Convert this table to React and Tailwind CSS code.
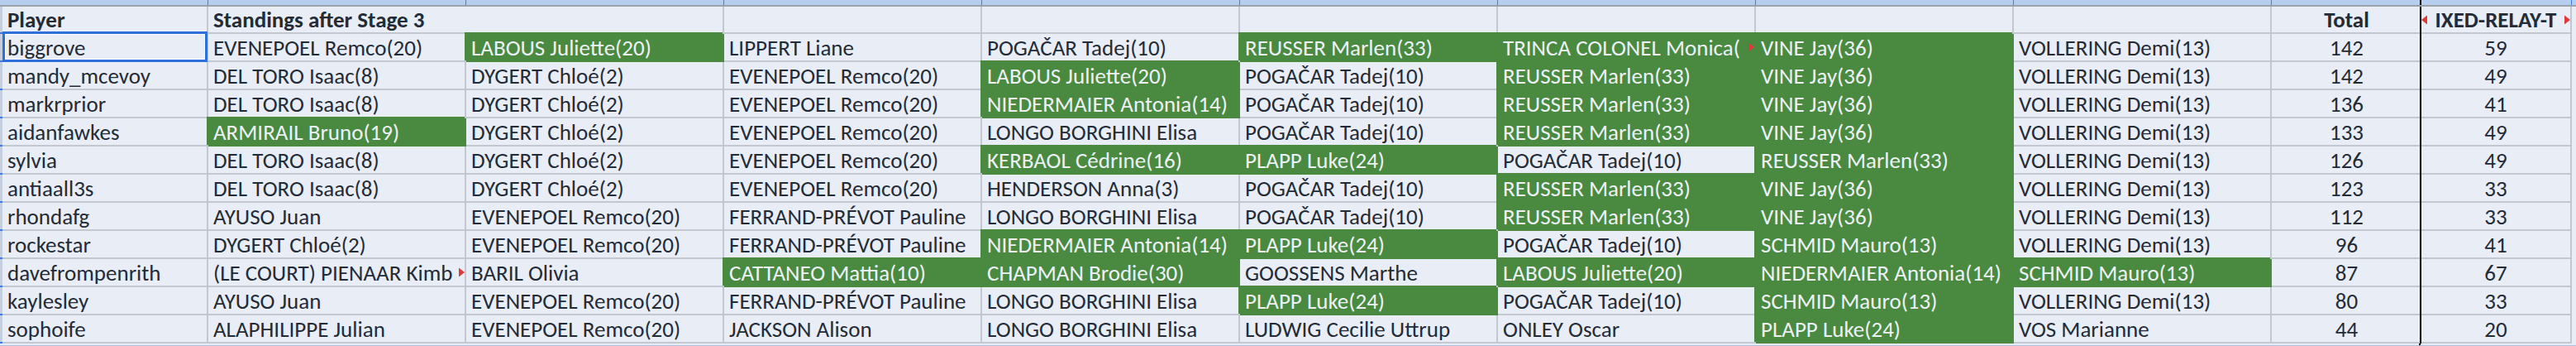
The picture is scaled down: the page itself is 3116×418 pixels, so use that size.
import React from 'react';

// '*' = green fill, '>' = text clipped (red overflow marker)
const rows = [
  ['biggrove', ['EVENEPOEL Remco(20)', '*LABOUS Juliette(20)', 'LIPPERT Liane', 'POGAČAR Tadej(10)', '*REUSSER Marlen(33)', '*>TRINCA COLONEL Monica(', '*VINE Jay(36)', 'VOLLERING Demi(13)'], 142, 59],
  ['mandy_mcevoy', ['DEL TORO Isaac(8)', 'DYGERT Chloé(2)', 'EVENEPOEL Remco(20)', '*LABOUS Juliette(20)', 'POGAČAR Tadej(10)', '*REUSSER Marlen(33)', '*VINE Jay(36)', 'VOLLERING Demi(13)'], 142, 49],
  ['markrprior', ['DEL TORO Isaac(8)', 'DYGERT Chloé(2)', 'EVENEPOEL Remco(20)', '*NIEDERMAIER Antonia(14)', 'POGAČAR Tadej(10)', '*REUSSER Marlen(33)', '*VINE Jay(36)', 'VOLLERING Demi(13)'], 136, 41],
  ['aidanfawkes', ['*ARMIRAIL Bruno(19)', 'DYGERT Chloé(2)', 'EVENEPOEL Remco(20)', 'LONGO BORGHINI Elisa', 'POGAČAR Tadej(10)', '*REUSSER Marlen(33)', '*VINE Jay(36)', 'VOLLERING Demi(13)'], 133, 49],
  ['sylvia', ['DEL TORO Isaac(8)', 'DYGERT Chloé(2)', 'EVENEPOEL Remco(20)', '*KERBAOL Cédrine(16)', '*PLAPP Luke(24)', 'POGAČAR Tadej(10)', '*REUSSER Marlen(33)', 'VOLLERING Demi(13)'], 126, 49],
  ['antiaall3s', ['DEL TORO Isaac(8)', 'DYGERT Chloé(2)', 'EVENEPOEL Remco(20)', 'HENDERSON Anna(3)', 'POGAČAR Tadej(10)', '*REUSSER Marlen(33)', '*VINE Jay(36)', 'VOLLERING Demi(13)'], 123, 33],
  ['rhondafg', ['AYUSO Juan', 'EVENEPOEL Remco(20)', 'FERRAND-PRÉVOT Pauline', 'LONGO BORGHINI Elisa', 'POGAČAR Tadej(10)', '*REUSSER Marlen(33)', '*VINE Jay(36)', 'VOLLERING Demi(13)'], 112, 33],
  ['rockestar', ['DYGERT Chloé(2)', 'EVENEPOEL Remco(20)', 'FERRAND-PRÉVOT Pauline', '*NIEDERMAIER Antonia(14)', '*PLAPP Luke(24)', 'POGAČAR Tadej(10)', '*SCHMID Mauro(13)', 'VOLLERING Demi(13)'], 96, 41],
  ['davefrompenrith', ['>(LE COURT) PIENAAR Kimb', 'BARIL Olivia', '*CATTANEO Mattia(10)', '*CHAPMAN Brodie(30)', 'GOOSSENS Marthe', '*LABOUS Juliette(20)', '*NIEDERMAIER Antonia(14)', '*SCHMID Mauro(13)'], 87, 67],
  ['kaylesley', ['AYUSO Juan', 'EVENEPOEL Remco(20)', 'FERRAND-PRÉVOT Pauline', 'LONGO BORGHINI Elisa', '*PLAPP Luke(24)', 'POGAČAR Tadej(10)', '*SCHMID Mauro(13)', 'VOLLERING Demi(13)'], 80, 33],
  ['sophoife', ['ALAPHILIPPE Julian', 'EVENEPOEL Remco(20)', 'JACKSON Alison', 'LONGO BORGHINI Elisa', 'LUDWIG Cecilie Uttrup', 'ONLEY Oscar', '*PLAPP Luke(24)', 'VOS Marianne'], 44, 20],
];

const Marker = ({ left }) => (
  <svg width="7" height="11" viewBox="0 0 7 11" className={`absolute top-1/2 -translate-y-1/2 ${left ? 'left-0' : 'right-0'}`}>
    <polygon points={left ? '7,0 0,5.5 7,11' : '0,0 7,5.5 0,11'} fill="#dc3b3b" />
  </svg>
);

const Cell = ({ value }) => {
  let text = value;
  const green = text.startsWith('*');
  if (green) text = text.slice(1);
  const clipped = text.startsWith('>');
  if (clipped) text = text.slice(1);
  return (
    <div
      className={`relative w-[312px] shrink-0 flex items-center pl-[6px] border-r-2 border-b-2 whitespace-nowrap overflow-hidden ${
        green
          ? 'bg-[#4a8a40] border-[#4a8a40] text-[#edf1f6] shadow-[-2px_-2px_0_0_#4a8a40]'
          : 'border-[#c3c8d0]'
      }`}
    >
      {text}
      {clipped && <Marker />}
    </div>
  );
};

const TopBand = () => (
  <div className="flex h-[6px] bg-[#b6cff1]">
    <div className="w-[3px] shrink-0" />
    <div className="w-[249px] shrink-0 border-r border-[#3d7be0]" />
    {Array.from({ length: 8 }).map((_, i) => (
      <div key={i} className="w-[312px] shrink-0 border-r border-[#3d7be0]" />
    ))}
    <div className="w-[181px] shrink-0 border-r-2 border-black" />
    <div className="w-[182px] shrink-0 border-r border-[#3d7be0]" />
  </div>
);

export default function App() {
  return (
    <div className="w-[3116px] h-[418px] overflow-hidden bg-[#e8edf6] text-[#232b36] [font-family:Carlito,Calibri,sans-serif] [font-size:27px] [line-height:27px]">
      <TopBand />
      <div className="h-[2px] bg-[#9ba1aa]" />

      {/* header row */}
      <div className="flex h-[33px] font-bold">
        <div className="w-[3px] shrink-0 bg-[#c5cedc] border-b-2 border-[#3d7be0]" />
        <div className="w-[249px] shrink-0 flex items-center pl-[6px] border-r-2 border-b-2 border-[#c3c8d0]">Player</div>
        <div className="w-[312px] shrink-0 flex items-center pl-[6px] border-b-2 border-[#c3c8d0] whitespace-nowrap">
          Standings after Stage 3
        </div>
        {Array.from({ length: 7 }).map((_, i) => (
          <div key={i} className="w-[312px] shrink-0 border-r-2 border-b-2 border-[#c3c8d0]" />
        ))}
        <div className="w-[181px] shrink-0 flex items-center justify-center border-b-2 border-[#c3c8d0] relative">
          Total
          <div className="absolute right-0 top-0 bottom-[-2px] w-[2px] bg-black" />
        </div>
        <div className="relative w-[182px] shrink-0 flex items-center justify-center border-r-2 border-b-2 border-[#c3c8d0] overflow-hidden whitespace-nowrap">
          <Marker left />
          IXED-RELAY-T
          <Marker />
        </div>
      </div>

      {rows.map(([player, picks, total, relay], r) => (
        <div key={player} className="flex h-[34px]">
          <div className="w-[3px] shrink-0 bg-[#c5cedc] border-b-2 border-[#3d7be0]" />
          <div className="relative w-[249px] shrink-0 flex items-center pl-[6px] border-r-2 border-b-2 border-[#c3c8d0]">
            {player}
            {r === 0 && (
              <div className="absolute left-0 top-[-3px] right-[-1px] bottom-[-2px] border-[3px] border-[#2f6fdc] shadow-[inset_0_0_0_1px_#ffffff]" />
            )}
          </div>
          {picks.map((p, i) => (
            <Cell key={i} value={p} />
          ))}
          <div className="relative w-[181px] shrink-0 flex items-center justify-center border-b-2 border-[#c3c8d0]">
            {total}
            <div className="absolute right-0 top-0 bottom-[-2px] w-[2px] bg-black" />
          </div>
          <div className="w-[182px] shrink-0 flex items-center justify-center border-r-2 border-b-2 border-[#c3c8d0]">
            {relay}
          </div>
        </div>
      ))}

      <div className="h-[3px] border-b border-[#a9bde0] flex">
        <div className="w-[2928px] shrink-0 border-r-2 border-black" />
      </div>
    </div>
  );
}
